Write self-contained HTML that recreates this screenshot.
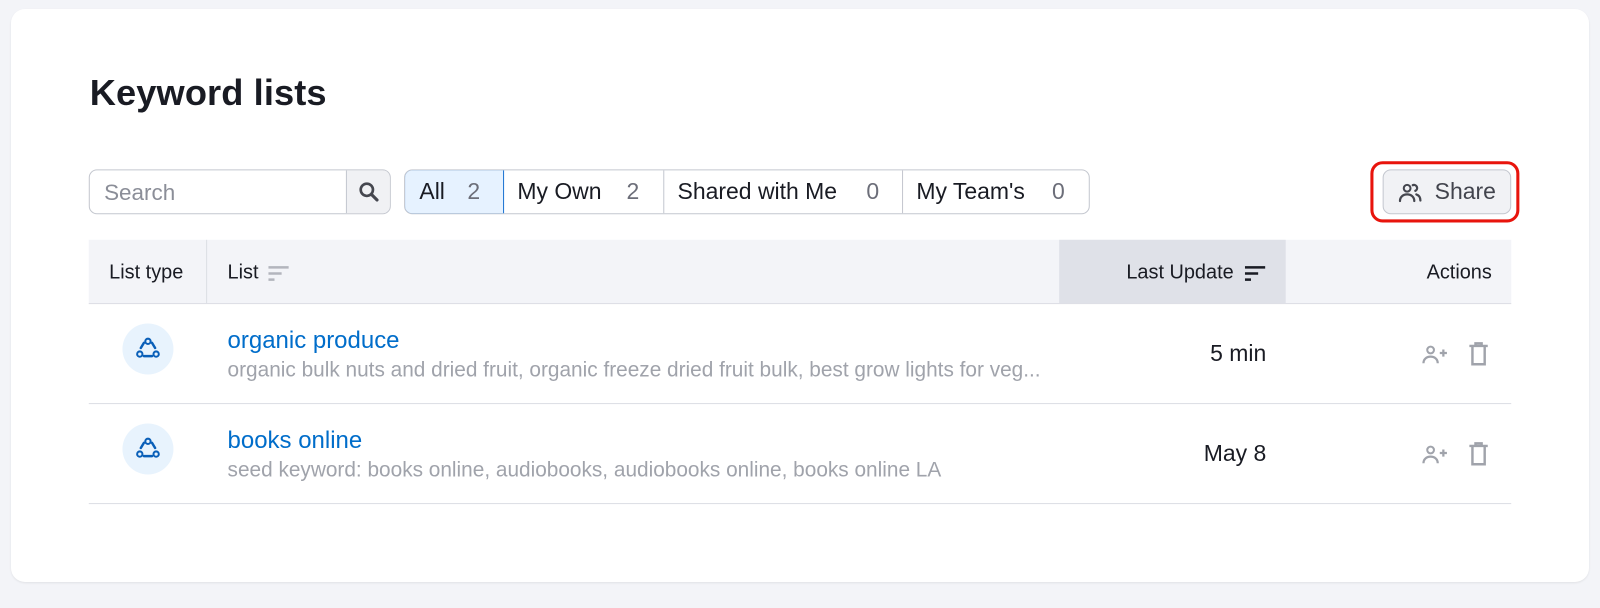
<!DOCTYPE html>
<html><head><meta charset="utf-8"><style>
*{box-sizing:border-box;margin:0;padding:0}
body{width:1600px;height:608px;background:#f3f4f8;font-family:"Liberation Sans",sans-serif;color:#191b23;position:relative;overflow:hidden}
.card{position:absolute;left:11px;top:9px;width:1578px;height:573px;background:#fff;border-radius:14px;box-shadow:0 1px 2px rgba(0,0,0,.08)}
.s{position:absolute;left:0;top:0;width:1568px;height:596px;transform:scale(1.0204);transform-origin:0 0}
.abs{position:absolute}
h1{position:absolute;left:88px;top:69px;font-size:35.5px;font-weight:bold;letter-spacing:0.1px;line-height:44px}
.search{left:87px;top:166px;width:296px;height:44px;border:1px solid #c4c7cf;border-radius:8px;overflow:hidden}
.search span{position:absolute;left:14px;top:9px;font-size:22px;color:#8b8e98;line-height:26px}
.search .btn{position:absolute;right:0;top:0;width:43px;height:42px;background:#f0f1f4;border-left:1px solid #c4c7cf}
.seg{left:396px;top:166px;width:672px;height:44px;border:1px solid #c4c7cf;border-radius:8px;overflow:hidden}
.seg div{position:absolute;top:0;height:42px;border-right:1px solid #c4c7cf;font-size:22.5px}
.seg span{position:absolute;top:8px;line-height:26px}
.seg b{position:absolute;top:8px;line-height:26px;font-weight:normal;color:#6c6e79}
.seg .on{background:#e6f2ff;border:1px solid #1a73d1;border-radius:8px 0 0 8px;top:-1px;height:44px;left:-1px}
.share{left:1343px;top:158px;width:146px;height:60px;border:3px solid #e8140c;border-radius:12px}
.sharebtn{left:1355px;top:166px;width:126px;height:44px;border:1px solid #c4c7cf;border-radius:8px;background:#f1f2f5;font-size:22.5px;color:#42444d}
.thead{left:87px;top:235px;width:1394px;height:63px;background:#f3f4f8;border-bottom:1px solid #dcdee4;font-size:19.5px}
.thead span{line-height:22px;top:21px}
.row{left:87px;width:1394px;height:98px;border-bottom:1px solid #dcdee4}
.ico{position:absolute;left:33px;top:19px;width:50px;height:50px;border-radius:50%;background:#e8f3fd}
.t1{position:absolute;left:136px;top:21px;font-size:23.5px;line-height:28px;color:#006dca}
.t2{position:absolute;left:136px;top:54px;font-size:20.4px;line-height:22px;color:#a0a3ab}
.tm{position:absolute;right:240px;top:36px;font-size:22.5px;line-height:26px}
</style></head><body>
<div class="card"></div>
<div class="s">
<h1>Keyword lists</h1>
<div class="abs search"><span>Search</span><div class="btn"><svg width="43" height="42" viewBox="0 0 43 42"><circle cx="19.5" cy="19" r="6" fill="none" stroke="#45474f" stroke-width="2.6"/><path d="M24 23.5l5.5 5.5" stroke="#45474f" stroke-width="3" stroke-linecap="round"/></svg></div></div>
<div class="abs seg">
<div class="on" style="left:-1px;width:98px"><span style="left:14px">All</span><b style="left:61px">2</b></div>
<div style="left:97px;width:157px"><span style="left:13px">My Own</span><b style="left:120px">2</b></div>
<div style="left:254px;width:234px"><span style="left:13px">Shared with Me</span><b style="left:198px">0</b></div>
<div style="left:488px;width:184px;border-right:none"><span style="left:13px">My Team's</span><b style="left:146px">0</b></div>
</div>
<div class="abs share"></div>
<div class="abs sharebtn"><svg class="abs" style="left:14px;top:11px" width="26" height="22" viewBox="0 0 26 22"><circle cx="9" cy="6.5" r="3.3" fill="none" stroke="#45474f" stroke-width="2"/><path d="M2 19c0-4 3-6.5 7-6.5s7 2.5 7 6.5" fill="none" stroke="#45474f" stroke-width="2.2" stroke-linecap="round"/><path d="M14.5 3.5a3 3 0 0 1 2.5 5.5M18 12.5c2.5.8 4 3 4 6" fill="none" stroke="#45474f" stroke-width="2.2" stroke-linecap="round"/></svg><span class="abs" style="left:50px;top:8px;line-height:26px">Share</span></div>
<div class="abs thead">
<span class="abs" style="left:20px">List type</span>
<div class="abs" style="left:115px;top:0;width:1px;height:62px;background:#dcdee4"></div>
<span class="abs" style="left:136px">List</span>
<svg class="abs" style="left:176px;top:25px" width="20" height="16"><path d="M0 2h20M0 8h13M0 14h6" stroke="#b3b5bd" stroke-width="2.4"/></svg>
<div class="abs" style="left:951px;top:0;width:222px;height:62px;background:#dfe1e8"></div>
<span class="abs" style="right:272px">Last Update</span>
<svg class="abs" style="left:1133px;top:25px" width="20" height="16"><path d="M0 2h20M0 8h13M0 14h6" stroke="#191b23" stroke-width="2.4"/></svg>
<span class="abs" style="right:19px">Actions</span>
</div>
<div class="abs row" style="top:298px">
<div class="ico"><svg width="50" height="50" viewBox="0 0 50 50"><circle cx="25" cy="17.5" r="2.6" fill="none" stroke="#0a5fb8" stroke-width="2"/><circle cx="17" cy="30" r="2.6" fill="none" stroke="#0a5fb8" stroke-width="2"/><circle cx="33" cy="30" r="2.6" fill="none" stroke="#0a5fb8" stroke-width="2"/><path d="M21 19l-3 5M29 19l3 5M21 32h8" stroke="#0a5fb8" stroke-width="2.4" stroke-linecap="round"/></svg></div>
<span class="t1">organic produce</span>
<span class="t2">organic bulk nuts and dried fruit, organic freeze dried fruit bulk, best grow lights for veg...</span>
<span class="tm">5 min</span>
<svg class="abs" style="left:1306px;top:38px" width="26" height="24" viewBox="0 0 26 24"><circle cx="9" cy="7" r="3.3" fill="none" stroke="#a0a3ab" stroke-width="2"/><path d="M2 20c0-4 3-6.5 7-6.5s7 2.5 7 6.5M18 10h7M21.5 6.5v7" fill="none" stroke="#a0a3ab" stroke-width="2.2"/></svg>
<svg class="abs" style="left:1352px;top:37px" width="20" height="24" viewBox="0 0 20 24"><path d="M1 4h18M7 4V1.5h6V4M4 4v18h12V4" fill="none" stroke="#a0a3ab" stroke-width="2.4"/></svg>
</div>
<div class="abs row" style="top:396px">
<div class="ico"><svg width="50" height="50" viewBox="0 0 50 50"><circle cx="25" cy="17.5" r="2.6" fill="none" stroke="#0a5fb8" stroke-width="2"/><circle cx="17" cy="30" r="2.6" fill="none" stroke="#0a5fb8" stroke-width="2"/><circle cx="33" cy="30" r="2.6" fill="none" stroke="#0a5fb8" stroke-width="2"/><path d="M21 19l-3 5M29 19l3 5M21 32h8" stroke="#0a5fb8" stroke-width="2.4" stroke-linecap="round"/></svg></div>
<span class="t1">books online</span>
<span class="t2">seed keyword: books online, audiobooks, audiobooks online, books online LA</span>
<span class="tm">May 8</span>
<svg class="abs" style="left:1306px;top:38px" width="26" height="24" viewBox="0 0 26 24"><circle cx="9" cy="7" r="3.3" fill="none" stroke="#a0a3ab" stroke-width="2"/><path d="M2 20c0-4 3-6.5 7-6.5s7 2.5 7 6.5M18 10h7M21.5 6.5v7" fill="none" stroke="#a0a3ab" stroke-width="2.2"/></svg>
<svg class="abs" style="left:1352px;top:37px" width="20" height="24" viewBox="0 0 20 24"><path d="M1 4h18M7 4V1.5h6V4M4 4v18h12V4" fill="none" stroke="#a0a3ab" stroke-width="2.4"/></svg>
</div>
</div>
</body></html>
